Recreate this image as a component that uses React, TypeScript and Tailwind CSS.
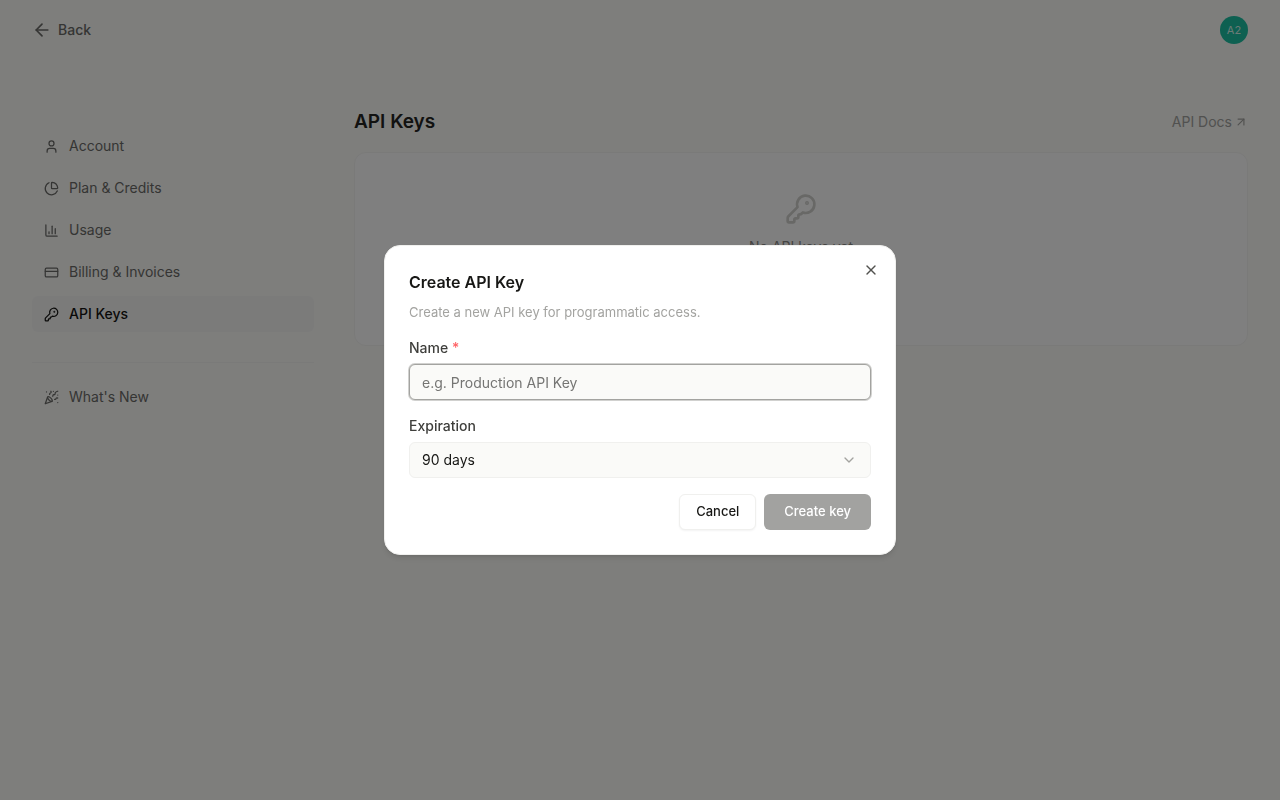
import { useState } from "react";
import {
  ArrowLeft,
  ArrowUpRight,
  ChartColumn,
  ChartPie,
  ChevronDown,
  CreditCard,
  KeyRound,
  LucideIcon,
  PartyPopper,
  User,
  X,
} from "lucide-react";

type NavItem = {
  label: string;
  icon: LucideIcon;
};

const navItems: NavItem[] = [
  { label: "Account", icon: User },
  { label: "Plan & Credits", icon: ChartPie },
  { label: "Usage", icon: ChartColumn },
  { label: "Billing & Invoices", icon: CreditCard },
  { label: "API Keys", icon: KeyRound },
];

function NavLink({ item, active }: { item: NavItem; active?: boolean }) {
  const Icon = item.icon;

  return (
    <a
      href="#"
      aria-current={active ? "page" : undefined}
      className={`flex h-9 items-center gap-2.5 rounded-md px-3 text-sm ${
        active ? "bg-[#f7f7f5] font-medium text-[#141412]" : "text-[#6b6b68]"
      }`}
    >
      <Icon size={15} strokeWidth={2} />
      {item.label}
    </a>
  );
}

function CreateKeyDialog({ onClose }: { onClose: () => void }) {
  const [name, setName] = useState("");
  const [expiration, setExpiration] = useState("90");

  return (
    <div className="fixed inset-0 flex items-center justify-center bg-black/50">
      <div
        role="dialog"
        aria-modal="true"
        aria-labelledby="dialog-title"
        className="relative w-full max-w-lg rounded-2xl border border-[#f0f0ee] bg-white p-6 shadow-md"
      >
        <button
          type="button"
          aria-label="Close"
          onClick={onClose}
          className="absolute top-4 right-4 text-[#52524f]"
        >
          <X size={16} />
        </button>

        <h2 id="dialog-title" className="text-base font-semibold text-[#171715]">
          Create API Key
        </h2>
        <p className="mt-2 text-[13px] leading-5 text-[#a3a3a0]">
          Create a new API key for programmatic access.
        </p>

        <form className="mt-4 flex flex-col gap-4" onSubmit={(e) => e.preventDefault()}>
          <div className="flex flex-col gap-1.5">
            <label htmlFor="key-name" className="text-sm font-medium text-[#3f3f3c]">
              Name <span className="text-[#ff6467]">*</span>
            </label>
            <input
              id="key-name"
              value={name}
              onChange={(e) => setName(e.target.value)}
              placeholder="e.g. Production API Key"
              className="h-9 rounded-md border border-[#a3a3a0] bg-[#fafaf8] px-3 text-sm text-[#171715] ring-1 ring-[#a3a3a0]/50 outline-none placeholder:text-[#757573]"
            />
          </div>

          <div className="flex flex-col gap-1.5">
            <label htmlFor="key-expiration" className="text-sm font-medium text-[#3f3f3c]">
              Expiration
            </label>
            <div className="relative">
              <select
                id="key-expiration"
                value={expiration}
                onChange={(e) => setExpiration(e.target.value)}
                className="block h-9 w-full appearance-none rounded-md border border-[#f0f0ee] bg-[#fafaf8] px-3 text-sm text-[#171715]"
              >
                <option value="30">30 days</option>
                <option value="90">90 days</option>
                <option value="365">1 year</option>
              </select>
              <ChevronDown
                size={16}
                className="pointer-events-none absolute top-2.5 right-3.5 text-[#a3a3a0]"
              />
            </div>
          </div>

          <div className="flex justify-end gap-2">
            <button
              type="button"
              onClick={onClose}
              className="h-9 rounded-md border border-[#f0f0ee] bg-white px-4 text-[13px] font-medium text-[#171715] shadow-xs"
            >
              Cancel
            </button>
            <button
              type="submit"
              disabled={!name}
              className="h-9 rounded-md bg-[#171715] px-5 text-[13px] font-medium text-white disabled:bg-[#a2a2a0]"
            >
              Create key
            </button>
          </div>
        </form>
      </div>
    </div>
  );
}

export default function App() {
  const [open, setOpen] = useState(true);

  return (
    <div className="min-h-screen bg-[#fcfcf9] font-[Inter,sans-serif]">
      <header className="flex h-15 items-center justify-between px-8">
        <a href="#" className="flex items-center gap-1.5 text-sm font-medium text-[#6b6b68]">
          <ArrowLeft size={20} strokeWidth={2} />
          Back
        </a>
        <div className="flex size-7 items-center justify-center rounded-full bg-[#1cc0a2] text-[11px] text-[#d8f5ec]">
          A2
        </div>
      </header>

      <div className="flex gap-10 px-8 pt-12">
        <nav className="w-[282px] shrink-0 pt-5">
          <div className="flex flex-col gap-1.5">
            {navItems.map((item) => (
              <NavLink key={item.label} item={item} active={item.label === "API Keys"} />
            ))}
          </div>
          <hr className="mt-[30px] mb-4 border-[#f5f5f3]" />
          <NavLink item={{ label: "What's New", icon: PartyPopper }} />
        </nav>

        <main className="flex-1">
          <div className="flex h-7 items-center justify-between">
            <h1 className="text-[19px] leading-7 font-semibold text-[#242422]">API Keys</h1>
            <a href="#" className="flex items-center gap-0.5 text-sm text-[#a3a3a0]">
              API Docs
              <ArrowUpRight size={14} />
            </a>
          </div>

          <section className="mt-4 flex min-h-[194px] flex-col items-center gap-3 rounded-xl border border-[#f5f5f3] bg-white pt-10">
            <KeyRound size={32} className="text-[#d0d0cd]" />
            <p className="text-sm text-[#8a8a87]">No API keys yet</p>
          </section>
        </main>
      </div>

      {open && <CreateKeyDialog onClose={() => setOpen(false)} />}
    </div>
  );
}
